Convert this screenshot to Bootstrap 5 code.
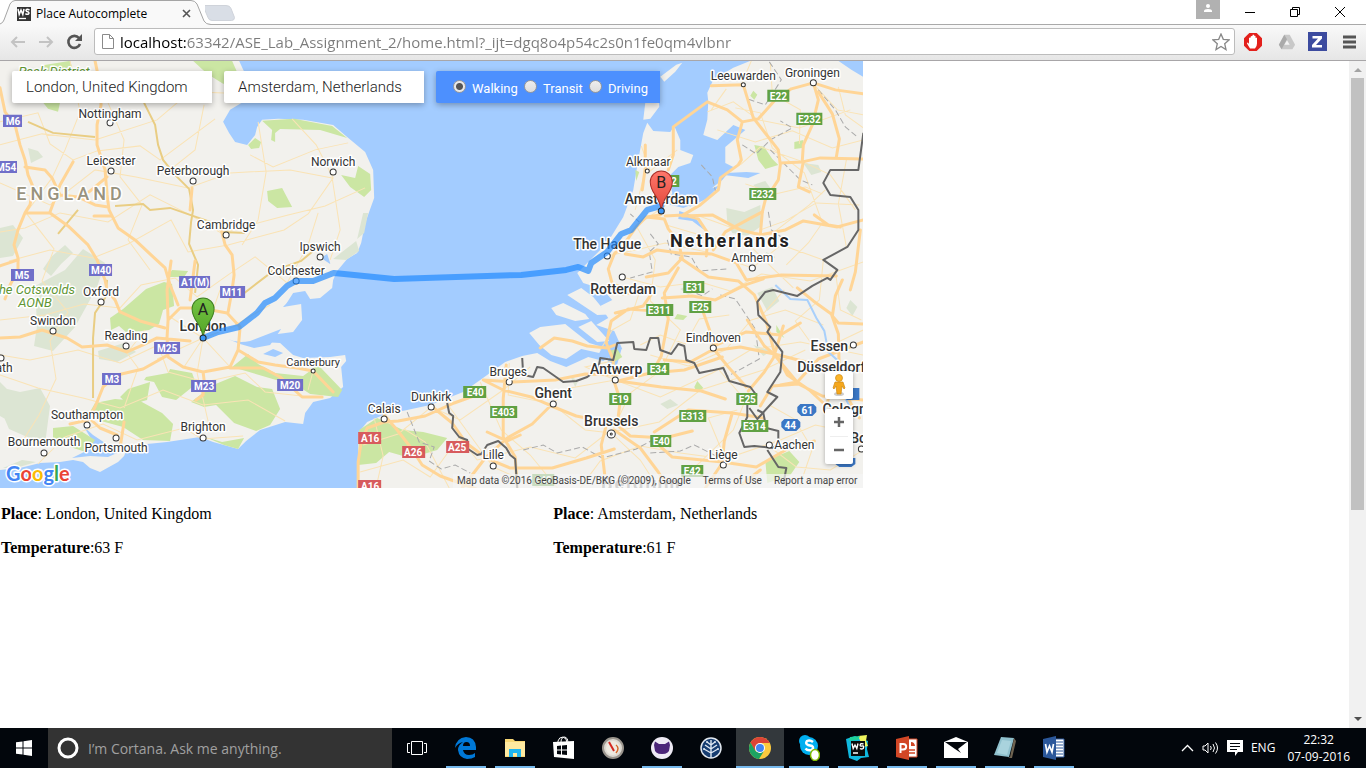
<!DOCTYPE html>
<html lang="en">
<head>
<meta charset="utf-8">
<meta name="viewport" content="width=device-width, initial-scale=1">
<title>Place Autocomplete</title>
<link href="https://cdn.jsdelivr.net/npm/bootstrap@5.3.0/dist/css/bootstrap.min.css" rel="stylesheet">
<style>
  body { font-family: "Open Sans", "Noto Sans", sans-serif; color: #000; background: #fff; }
  button { border: 0; background: none; padding: 0; color: inherit; }
  svg { display: block; flex: none; }

  /* browser frame */
  .tabstrip { height: 25px; }
  .tab-current { width: 205px; height: 25px; padding: 2px 14px 0 17px; font-size: 12px; line-height: 22px; }
  .tab-shape { position: absolute; left: 0; top: 0; z-index: 1; }
  .tab-current > :not(.tab-shape) { position: relative; z-index: 2; }
  .tab-title { margin-left: 5px; }
  .strip-line { position: absolute; left: 0; right: 0; bottom: 0; height: 1px; background: #a9a9a9; }
  .user-chip { width: 24px; height: 19px; background: #b1b1b1; }
  .toolbar { height: 36px; padding: 0 10px 2px 10px; background: linear-gradient(#f9f9f9, #e6e6e6); border-bottom: 1px solid #a8a6a8; }
  .omnibox { height: 27px; border: 1px solid #bcbcbc; border-radius: 3px; padding: 0 4px 0 6px; margin: 0 9px 0 10px; background: #fff; }
  .omnibox input { border: 0; outline: 0; padding: 0; margin-left: 5px; min-width: 0; font-size: 15px; line-height: 24px; color: transparent;
    background: linear-gradient(90deg, #000 67px, #7b7b7b 67px); -webkit-background-clip: text; background-clip: text; }

  /* scrollbar */
  .scroll-rail { width: 17px; background: #f1f1f1; }
  .scroll-rail button { height: 17px; }
  .scroll-thumb { height: 432px; margin: 0 2px; background: #c1c1c1; }

  /* page */
  .viewport { min-height: 0; }
  .map-frame { width: 64%; height: 64%; background: #a3ccff; font-family: Roboto, sans-serif; }
  .map-controls { position: absolute; top: 10px; left: 12px; gap: 12px; }
  .map-controls > * { height: 32px; border-radius: 2px 0 0 2px; box-shadow: 0 2px 6px rgba(0,0,0,.3); }
  .place-input { width: 200px; border: 1px solid transparent; background: #fff; padding: 0 11px 0 13px; font-size: 15px; font-weight: 300; color: #222; outline: 0; }
  .mode-picker { width: 224px; background: #4d90fe; color: #fff; font-size: 13px; font-weight: 400; padding: 3px 12px 0 17px; }
  .mode-picker input { appearance: none; width: 13px; height: 13px; margin: -5px 6px 0 0; border-radius: 50%; border: 1px solid #999; background: linear-gradient(#eee, #ddd); }
  .mode-picker input:checked { background: radial-gradient(circle, #555 0 3px, #e8e8e8 4px); }
  .map-button { width: 28px; background: #fff; border-radius: 2px; box-shadow: 0 1px 4px rgba(0,0,0,.3); }
  .map-tools { position: absolute; right: 10px; bottom: 24px; gap: 10px; }
  .map-tools hr { margin: 0 5px; color: #bbb; }
  .pegman { height: 28px; }
  .zoom-step { height: 27px; }
  .map-credit { position: absolute; right: 0; bottom: 0; height: 14px; padding: 0 6px 0 4px; gap: 12px; background: rgba(245,245,245,.7); font-size: 10px; line-height: 14px; }
  .map-credit, .map-credit a { color: #444; text-decoration: none; }
  .weather { padding: 17px 1px; font: 16px/18px "Liberation Serif", serif; }
  .weather section { width: 41%; }
  .weather p { margin: 0 0 16px; }

  /* map drawing */
  .land { fill: #f2f1ed; }
  .park { fill: #cbe6a3; }
  .moor { fill: #dce5d3; }
  .water { fill: #a3ccff; }
  .lane { fill: none; stroke: #fae3b5; stroke-width: 1; }
  .aroad { fill: none; stroke: #e9cd83; stroke-width: 2; }
  .mway { fill: none; stroke: #ffd596; stroke-width: 3; stroke-linejoin: round; stroke-linecap: round; }
  .frontier { fill: none; stroke: #666; stroke-width: 2; stroke-linejoin: round; }
  .province { fill: none; stroke: #aaa; stroke-width: 1; stroke-dasharray: 6 3; }
  .town text { font-size: 12px; fill: #333; stroke: #fff; stroke-width: 3px; paint-order: stroke; stroke-linejoin: round; text-anchor: middle; }
  .town .city { font-size: 14px; font-weight: 500; }
  .town .minor { font-size: 11px; }
  .town .reserve { font-size: 13px; font-style: italic; fill: #619634; }
  .dots circle { fill: #fff; stroke: #333; stroke-width: 1; }
  .shield text { font-size: 10px; font-weight: 700; fill: #fff; text-anchor: middle; }

  /* taskbar */
  .taskbar { height: 40px; background: #02060c; color: #fff; }
  .start { width: 48px; }
  .cortana { width: 344px; background: #333; padding-left: 9px; gap: 9px; }
  .cortana input { border: 0; outline: 0; background: none; padding: 0; color: #fff; font-size: 14px; }
  .cortana input::placeholder { color: #a0a0a0; opacity: 1; }
  .apps { gap: 1px; padding-left: 1px; }
  .app { width: 48px; position: relative; }
  .app.running::after { content: ""; position: absolute; left: 4px; right: 4px; bottom: 0; height: 2px; background: #76b9ed; }
  .app.current { background: #33383c; }
  .app.current::after { left: 0; right: 0; }
  .tray { gap: 8px; padding-right: 16px; font-size: 12px; }
  .clock { line-height: 17px; font-size: 12px; }
</style>
</head>
<body class="vh-100 d-flex flex-column overflow-hidden">

<header>
  <div class="tabstrip d-flex position-relative">
    <div class="strip-line"></div>
    <div class="tab-current position-relative d-flex align-items-center">
      <svg class="tab-shape" width="212" height="25" viewBox="0 0 212 25"><path d="M0 25V23Q3 22 4 19L10 4Q12 1 15 1H191Q195 1 197 4L204 21Q206 24.500 211 24.500V25Z" fill="#f9f9f9"/><path d="M0 24Q3 23 4 20L10 4Q12 .5 15 .5H191Q195 .5 197 4L204 21Q206 24.500 211 24.500" fill="none" stroke="#a5a5a5"/></svg>
      <svg width="14" height="14" viewBox="0 0 14 14"><rect width="14" height="14" fill="#333"/><path d="M1 2l1.200 5.500L4 3l1.800 4.500L7 2M12.500 3Q9.500 1.500 9 3.300 9.200 4.500 11 4.800 12.800 6 11.200 7.200 9.800 7.600 8.400 6.600" fill="none" stroke="#fff" stroke-width="1.500"/><path d="M2 11.500h7" stroke="#fff" stroke-width="1.300"/></svg>
      <span class="tab-title flex-grow-1 text-nowrap">Place Autocomplete</span>
      <button aria-label="Close tab"><svg width="9" height="9" viewBox="0 0 9 9"><path d="M1 1l7 7M8 1L1 8" stroke="#555" stroke-width="1.600"/></svg></button>
    </div>
    <button class="align-self-start" aria-label="New tab"><svg width="30" height="22" viewBox="0 0 30 22"><path d="M0 5.500h21q4 0 5 3l3.500 9q0 3-3 3H7q-3 0-4-3L-1 8q-1-2.500 1-2.500z" fill="#d9dee6" stroke="#cfd3da"/></svg></button>
    <div class="ms-auto d-flex align-items-start">
      <div class="user-chip d-flex justify-content-center"><svg width="10" height="13" viewBox="0 0 10 13"><circle cx="5" cy="6" r="2" fill="#fff"/><path d="M1 12v-1q0-2 4-2t4 2v1z" fill="#fff"/></svg></div>
      <button class="ms-4" aria-label="Minimise"><svg width="12" height="24" viewBox="0 0 12 24"><path d="M1 12.500h10" stroke="#000"/></svg></button>
      <button class="mx-4 px-2" aria-label="Restore"><svg width="14" height="24" viewBox="0 0 14 24"><path d="M2.500 9.500h7v7h-7zM4.500 9v-1.500h7v7H10" fill="none" stroke="#000"/></svg></button>
      <button class="me-3 pe-1" aria-label="Close"><svg width="12" height="24" viewBox="0 0 12 24"><path d="M1 7l10 10M11 7L1 17" stroke="#000"/></svg></button>
    </div>
  </div>
  <div class="toolbar d-flex align-items-center">
    <button aria-label="Back"><svg width="16" height="14" viewBox="0 0 16 14"><path d="M15 7H2M7 2L2 7l5 5" fill="none" stroke="#c3c3c3" stroke-width="2"/></svg></button>
    <button class="ms-2 ps-1" aria-label="Forward"><svg width="16" height="14" viewBox="0 0 16 14"><path d="M1 7h13M9 2l5 5-5 5" fill="none" stroke="#c3c3c3" stroke-width="2"/></svg></button>
    <button class="ms-2 ps-1" aria-label="Reload"><svg width="18" height="16" viewBox="0 0 18 16"><path d="M14 10A6 6 0 1 1 13 4" fill="none" stroke="#555" stroke-width="2.600"/><path d="M16 0v7H9z" fill="#555"/></svg></button>
    <div class="omnibox d-flex align-items-center flex-grow-1">
      <svg width="14" height="17" viewBox="0 0 14 17"><path d="M1.500 1.500h7l4 4v10h-11zM8.500 1.500v4h4" fill="#fff" stroke="#8a8a8a"/></svg>
      <input class="flex-grow-1" aria-label="Address" value="localhost:63342/ASE_Lab_Assignment_2/home.html?_ijt=dgq8o4p54c2s0n1fe0qm4vlbnr">
      <button aria-label="Bookmark"><svg width="18" height="18" viewBox="0 0 18 18"><path d="M9 1l2.300 5.300 5.700.6-4.300 3.800 1.300 5.900L9 13.500l-5 3.100 1.300-5.900L1 6.900l5.700-.6z" fill="#fff" stroke="#888" stroke-width="1.300"/></svg></button>
    </div>
    <button aria-label="Ad blocker"><svg width="18" height="18" viewBox="0 0 18 18"><path d="M5.300 0h7.400L18 5.300v7.400L12.700 18H5.300L0 12.700V5.300z" fill="#e3201b"/><path d="M5 5v6l-1-1.500q-1 0-1 1l3 5h5q2-2 2-5V5q-1-1-1.500 0v3-5q-1-1-1.500 0v4-5q-1-1-1.500 0v5-4Q7 2.500 6.500 4v4-3Q6 4 5 5z" fill="#fff"/></svg></button>
    <button class="ms-3" aria-label="Drive"><svg width="18" height="18" viewBox="0 0 20 18"><path d="M7 1h6l6 11-3 5H4l-3-5z" fill="#c8c8c8"/><path d="M7 1l3 5-6 11-3-5z" fill="#aaa"/><path d="M7 12l3-5 3 5z" fill="#f4f4f4"/></svg></button>
    <button class="ms-2 ps-1" aria-label="Zotero"><svg width="19" height="19" viewBox="0 0 19 19"><rect width="19" height="19" fill="#3c4b9f"/><path d="M4.500 4h9.500v2.500l-6 6.500h6v2.500h-10V13l6-6.500h-5.500z" fill="#fff"/></svg></button>
    <button class="ms-3" aria-label="Menu"><svg width="13" height="14" viewBox="0 0 13 14"><path d="M0 2h13M0 7h13M0 12h13" stroke="#555" stroke-width="3"/></svg></button>
  </div>
</header>

<main class="viewport flex-grow-1 d-flex">
  <div class="flex-grow-1 h-100 overflow-hidden">
    <div class="map-frame position-relative overflow-hidden">
      <svg width="100%" height="100%" viewBox="0 61 863 427" preserveAspectRatio="xMidYMid slice" role="img" aria-label="Route from London to Amsterdam">
        <rect class="water" x="0" y="61" width="863" height="427"/>
        <!-- Great Britain -->
        <path class="land" d="M0 61H239L245 74 252 88 247 100 240 104 230 110 223 122 229 133 235 142 247 145 255 135 257 127 262 120 278 119 303 120 333 125 347 137 365 152 373 170 374 198 365 223 361 243 357 253 347 259 337 271 333 280 332 288 320 298 310 299 305 291 293 293 286 304 283 307 301 304 302 320 293 332 270 335 262 342 280 343 293 355 303 358 330 357 345 355 346 361 341 367 343 387 330 398 313 402 305 413 303 424 285 422 260 430 246 441 238 449 213 442 200 437 167 442 147 444 127 449 124 456 118 462 100 472 90 468 83 462 73 460 60 462 40 463 20 468 0 470Z"/>
        <path class="water" d="M228 339Q238 344 250 341L281 329 270 345 254 348 240 344ZM84 427l9 8 12 8 14 9-11 5-18-1-18 2 14-7 9-4-5-10z"/>
        <path class="water" d="M330 264l-9-6 6-4 3 9zM283 307l12-4-3-5-9 9zM263 354l10-5 10 4-8 4z"/>
        <g class="moor">
          <path d="M35 286l30-16 18-21 22 14-8 24-22 40-22 24-19-5 3-20zM0 228l13-3 10 13-10 18-13 2zM51 257l14-12 8 8-12 11-10 12-8-7zM20 392l20-4 10 18-5 38-20-8-16-7-9-21 3-20zM98 351l26-8 12 9-19 10-18-3zM333 259l23-18 3 10-13 9zM28 148l10 3 5 6-12 6zM357 239l6-26 5 0-4 20zM0 382l10 10-3 28-7-4zM22 460l14 2-20 6-13 0z"/>
        </g>
        <g class="park">
          <path d="M110 318l13-9 15-13 8-7 18-7 8 2 2 22-11 4-4 14-10 6-22 3-8-7-8 4zM95 403l20-4 25 2 22 12 11 11-3 17-27-1-20-13-22-6-14-4zM146 377l22-4 2-4 22 4 4 11-20 16-14-3-8-15-10-2zM191 402l22-17 22-9 22 11 15 2 8 20-10 16-14 6-22-8-18-18-12 2zM53 428l20-2 22 14-9 12-19-6-14-6zM205 437l17 5 22-4-6 11-14-4zM232 367l16-13 10 10 17 9 28 3 15-11 24 25-4 7-28-3-20-13-14-1zM262 121l32-2 38 7 15 12-27-8-40-1-5 4v9l-4-2 1-10zM193 61h39l11 25-20-2-16-10zM40 66l30-5 6 18-14 7-18-8zM36 94l25 4-3 14-10-3zM267 191l15-3 10 19-15 1-9-7zM341 175l14 3 3-12 12 8 1 16-7 7-14-10zM172 270l16 1-4 6-17 0zM248 145l7-7 6 4-2 6-8 1zM128 389l22-7-3 18-18 5-9-8z"/>
        </g>
        <g class="lane">
          <path d="M0 122L38 113 50 144 73 160 97 151 140 146 160 160 215 119M0 145L42 134 95 140 157 120 190 92 245 94M0 183L50 205 95 170 136 177 188 188 230 173 290 170 332 178M0 232L25 228 60 213 108 222 150 195 190 215 221 233 288 215 325 206 365 188M9 261L50 250 93 258 128 244 171 220 188 252 228 245 284 230 308 214 333 178 316 145 292 119M0 320L45 315 84 304 120 308 141 285 175 278 197 297 228 275 255 257 287 283 308 245 318 213M0 355L30 360 78 350 120 363 158 345 168 372 205 382 245 373 265 392 302 396M0 375L38 388 83 398 120 408 163 390 203 405 248 400 285 421M38 464L65 437 103 424 137 440 184 428 202 439 243 436M108 103L124 140 120 177 142 205 128 240 150 270M204 105L195 150 170 170M258 122L266 172 258 220 242 245M348 143L315 150 273 167 250 155M332 178L340 230 330 260M70 61L80 112 65 150 52 178 26 213 54 249 42 281 68 312 50 341 56 379 39 415 17 450M124 408L138 368 127 353 145 330M220 290L203 338 197 373 210 430M203 338L167 315M203 338L230 367M203 338L238 325M203 338L184 367M203 338L201 310M203 338L157 359M313 371L308 390M270 305L235 325"/>
        </g>
        <path class="aroad" d="M28 122l25 11 42 4M144 103l11 22 3 20 5 15 12 15 14 14 4 21-2 12-2 22 9 21-3 28M115 206l28-2 7 6 20-2 20 7 20 7 13 10 22 1M107 280l-2 18-10 15-2 25v60M78 210l-20 24M243 294l30-23 28-10 18-15"/>
        <g class="mway">
          <path d="M0 88l5 24 10 13 5 20 5 15 3 15 5 12-3 18-5 8-7 17-4 15 4 13v12l-8 15-5 14M95 61l5 24 1 20-4 20v20l8 25 2 25 2 15 9 18 17 12 17 16 13 12 5 17 8 20M25 167l20 3 7 8 8 17 18 2 17 8 13 2M73 162l-13 23-10 27M27 213h23l18 13 20 19 9 15 8 20 2 10 8 10 5 12 20 9 25 7M192 188l-2 22M221 229l4 16 7 10 2 20-2 15-4 22"/>
          <path d="M168 320l12-12h20l27 5 13 14-2 23-8 17-27 5-20-5-15-10-1-20zM0 338l20-1 22-7 25 8 15 9 25-2 20 7 16-7 14-7 33 3M168 355l-25 14-26 6-14 12-8 20-7 13-18 4M88 417l12 11 17 7M230 368h33l17 9 22 20h20M238 350l20 12 17 3 22 3 16 3 20 21M203 372l1 8-1 15-7 5M0 266l18-6M168 320l-1-30 4-29M190 300l5-39M107 177l-18 15M94 216h17M120 448l4-26"/>
        </g>

        <!-- Continental Europe -->
        <path class="land" d="M358 488V433L367 422 383 415 407 410 430 405 463 392 480 380 505 362 522 356 537 353 550 361 566 367 588 357 603 361 622 349 614 331 596 325 608 318 600 306 612 300 602 289 583 283 577 273 590 260 607 243 623 217 633 190 638 160 643 133 647 123 653 131 670 132 674 126 680 140 680 150 693 155 690 163 678 167 668 177 672 193 667 204 683 208 700 201 713 187 722 180 733 167 725 163 725 147 738 136 745 130 733 125 717 140 703 135 707 120 708 102 707 93 713 80 733 68 750 61H863V488Z"/>
        <path class="water" d="M838 61h25v16l-12-7zM702 192l18-7-14 14-17 8zM724 175l24 3 12-5-14-1-20 1zM679 211l15 5 10 14-12-9-14-2zM612 344l9 6-6 21-8-7z"/>
        <g class="land">
          <path d="M529 333l11-6 25-3 10 8 14 11 13 4-3 6-18-4-15 10-15-4-12-10zM551 308l12-5 22 11 4 5-14 2-19-6zM567 295l14-7 12 9 9 11 17 6-22 1-12-8zM578 327l13-6 18 20-12 1zM645 103l13-6 1 10-9 12-7 1zM660 77l16-12 6-2-7 9-11 10z"/>
        </g>
        <g class="moor">
          <path d="M726 208l18 4 16-7 1 21-14 10-15-3-5-10zM757 293l15-6 7 14-12 10zM680 289l13-7 5 8-10 5zM850 300l7 7-5 9-6-8zM753 185l12-4 5 7-11 4zM753 345l18 6-8 5zM660 404l10-5 8 6-11 4zM766 252l9 5-5 6-8-3zM803 163l15 2 3 7-10 3zM570 376l8 5-3 6z"/>
        </g>
        <g class="park">
          <path d="M359 430l18-12 26 12 20 2 24 6-10 12-27 8-21-6-13 11-18 2zM754 145l10 2 8 12 6 6-13 4-7-9zM794 142l9-2-1 8-8 1zM765 461l24-10 10 11-9 13-23 8zM753 91l4 4-3 5-4-4zM608 351l9-2 5 8-8 5zM677 314l10 2-4 4-9-1zM635 170l4 2-3 9zM697 381l6 7-6 5-3-6zM776 325l8 13-8-6z"/>
        </g>
        <g class="lane">
          <path d="M363 445L398 434 431 407 460 420 503 390 530 367M360 472L403 460 430 477 459 437 477 460 530 447 575 458 607 433 659 422 700 390 763 370 805 350M374 418L383 456 376 487M404 429L425 442 449 488M445 401L466 430 493 467 540 488M480 382L501 430 530 455 558 489M509 363L508 395 552 404 570 388 615 380 660 397 712 373 750 350 800 342 863 355M552 404L585 430 611 433 640 460 658 488M611 433L630 393 660 371 680 330 650 301 655 260 636 226 676 198M615 380L585 367 612 361M622 277L660 287 700 282 730 291 761 274 810 281 863 262M607 256L635 250 665 243 706 252 752 268 781 245 823 260M641 146L650 171 677 150M707 112L733 102 758 120 799 128 850 110M717 130L755 142 792 131 832 148 863 140M740 165L760 147 803 162 830 175 855 210M696 215L735 229 770 235 809 205 825 190M666 225L710 238 742 238 770 266 793 288M741 85L751 61M726 89L711 110M770 63L772 94 800 110 799 144M812 83L837 110 863 115M838 87L845 115 863 128M823 260L819 300 795 321 817 352 863 330M835 270L840 310 861 320M650 355L688 366 725 350 751 320 785 310 823 325M717 368L745 400 733 430 700 462 668 489M580 488L600 461 640 446 680 453 725 459 780 440 815 425 863 435M725 459L708 418 737 410M767 445L796 467 830 470 863 450M799 487L812 449 794 419 769 405M760 230L785 221 816 203 859 205M784 290L762 315M600 350L612 330 630 320 640 290M645 171L635 210M735 108l25 5 12 35 32 25 18 50-14 20-22 22M846 160l-8 44 8 43M745 184l30 10 30-7 17 7M640 345l20-10 25 9 14-25 30-4"/>
        </g>
        <g class="province"><path d="M769 62l12 18-16 25-18-6M818 90l17 20 10 17 12 10M742 145l14 9 14-14 22-12-12-7M768 212l3 18 14 10M701 165l11 12 4 18M640 223l-10-9M650 234l8 10-9 8 3 20-22 6M667 240l4 14 20 3 8 14 27-2M720 295l15 4 20 30 4 30-33 18M688 290l14 6 10-7M407 412l12 30 15 5-5 14 12 8 14-4 15 8M523 450l20-5 14 8 25-6 20 11 34-9 18-10 18 9M650 453l30-2 14-6 30 15M770 150l30 30 12 5"/></g>
        <g class="mway">
          <path d="M673 127l34-25 20 8 15 12 16-3 17-19 16-11 22-6 22 7 28 4M711 86l32-1 10 33 25 32 2 15-2 15-13 20-3 12-2 23M742 122l-5 18 4 20-3 5-18 13-2 12-18 15-17 10-18 1M673 127v28l-5 15M780 163l22-1 18-4 43 1M813 83l5 17-6 25-9 20-1 15"/>
          <path d="M818 92l14 22 7 25-3 18M803 162l-5 25 11 5M645 145v23l-3 22M660 215l-14 2-10 10-12 17-10 10-6 15 4 15 18 6M646 217l18 2 4 10 10 13 4 16-14 15-22 4M683 215l15 4 10 15-2 22M762 212l-15 8-22 12-12 18M760 235l-20-5-28-15-30 1M625 254l18 3 14-7 22 3 32 1 25 9 10 17 35-5 55 1"/>
          <path d="M760 235l25-5 18-9 34 6 26-7M814 215l14 10 12 2M678 268l-14 25 4 26-7 37-10 18M680 258l28 19 30 4 16 14 12 27 9 34 20 24M662 298l30-2 23 4 30-15 18-6M700 304l10 28 4 14M714 346l32-14 34 3 20-12M655 311l-27-2-17 12-5 22 7 17 0 12M602 287l20 7 16-2M615 313l28-7 11-16M540 348l14-10 18 3 15 5 20 2 8-3M617 375l-32-1-30 6-42 2-30-2 20 10 28 7 20 9 25 10 35 7M618 381l32-8 34-3 38-13M618 381l43 6 40 4 24 8M614 382l6 18-3 25 13 11 34 2 28-7M614 430l26 18 18 24 10 16M606 425l-5 20 5 43M552 404l-20 20-25 14-22 20-23 30M506 365l-3 34v38l12 20 2 30M358 488v-26l3-20 6-14 17-6 14-1 27-5 29-13 25-9M384 415l13 15 14 18 11 17 18 11 36 13M430 405l22 18 14 20 20 15 24 10 42 0 34-10 28-9M487 432l20 9 13-6M664 360l26 2 20-11 30-4 34 7 40 10 49 7"/>
          <path d="M654 432l34-22 44 3 31 5M732 413l-8 28-2 21-50-5-18-16M722 462l34 5 31-18 27-8M760 406l12-20 26-2 24 12 41 4M747 320l17 26 14 12 9 17 22 15 15 14M797 288l16 13 18 13 7 20 1 40 6 20 14 24M748 391l16-19 9-14 10-32M842 280l-7 16-3 20 6 7 25 1M780 385l17-3 21-23 45-17M711 346l17 21 18 20M722 463l-17 25M760 470l-18 14M860 230l-5 42-5 18M850 365l-18 16-5 22 14 20 2 29"/>
        </g>
        <path d="M775 285l15 14 17 1 9 18 8 13 4 21 10 9 3 29 10 20" fill="none" stroke="#a9d0fb" stroke-width="2"/>
        <g class="frontier">
          <path d="M863 133l-5 37-28 0-7 13 7 12 20 2 8 13v20l-11 17-24 13 14 10-7 10-3-2-15 8-15 10-24-6-8 2-8 10 1 13 12 12-3 5 15 20-2 20-13 20 10 5-20 22-8-11"/>
          <path d="M522 358l1 17 10 2 4-10 6 1 20 14 13-1 11-4 11-8 2-11 13 2 4-17 16-1 1 7 12 1 4-12 8 0 2 12 11 4 7-10 6 2 2 14 8 3 5 10 24-5 6 13 21 6 6 8-9 10 0 12-8 16 5 14 10-1 19 2 5-5 0-12-12-3-3-15-6-3M767 450l11 17 8 1-3 16M447 403l2 10 4 3-1 12 7 9 8 3 1 9 9 6 4-1 6-9 11-4 8 7 4 7 5 4 2 29"/>
        </g>

        <!-- road shields -->
        <g class="shield">
          <g fill="#706fc9"><path d="M3 115h19v12H3zM0 161h17v12H0zM11 269h23v12H11zM89 264h23v12H89zM179 276h31v12h-31zM220 286h25v12h-25zM154 342h26v12h-26zM102 373h19v12h-19zM191 380h25v12h-25zM277 379h26v12h-26z"/></g>
          <g fill="#60a143"><path d="M767 90h22v12h-22zM796 113h26v12h-26zM749 188h27v12h-27zM655 175h24v12h-24zM683 281h21v12h-21zM646 304h27v12h-27zM689 301h22v12h-22zM647 363h22v12h-22zM463 386h23v12h-23zM490 406h27v12h-27zM609 393h22v12h-22zM736 393h21v12h-21zM679 410h27v12h-27zM741 420h27v12h-27zM650 435h21v12h-21zM681 465h22v12h-22zM532 474h22v12h-22z"/></g>
          <g fill="#d75b5d"><path d="M358 432h23v12h-23zM402 446h23v12h-23zM446 441h23v12h-23zM358 480h23v12h-23z"/></g>
          <g fill="#3b77c5"><path d="M797 407l3-3h13l3 3v5l-4 4h-11l-4-4zM781 422l3-3h13l3 3v5l-4 4h-11l-4-4zM846 388h13v12h-13zM835 458h20v6l-4 3h-12l-4-3z"/></g>
          <text x="13" y="125">M6</text><text x="6" y="171">M54</text><text x="22" y="279">M5</text><text x="101" y="274">M40</text><text x="195" y="286">A1(M)</text><text x="232" y="296">M11</text><text x="167" y="352">M25</text><text x="112" y="383">M3</text><text x="204" y="390">M23</text><text x="290" y="389">M20</text>
          <text x="778" y="100">E22</text><text x="809" y="123">E232</text><text x="762" y="198">E232</text><text x="668" y="185">E22</text><text x="694" y="291">E31</text><text x="659" y="314">E311</text><text x="700" y="311">E25</text><text x="658" y="373">E34</text><text x="475" y="396">E40</text><text x="503" y="416">E403</text><text x="620" y="403">E19</text><text x="747" y="403">E25</text><text x="692" y="420">E313</text><text x="754" y="430">E314</text><text x="661" y="445">E40</text><text x="692" y="475">E42</text><text x="543" y="484">E42</text>
          <text x="370" y="442">A16</text><text x="413" y="456">A26</text><text x="457" y="451">A25</text><text x="370" y="490">A16</text><text x="807" y="414">61</text><text x="790" y="429">44</text>
        </g>
        <g class="dots">
          <circle cx="110" cy="123" r="3"/><circle cx="111" cy="171" r="3"/><circle cx="193" cy="181" r="3"/><circle cx="333" cy="172" r="3"/><circle cx="226" cy="235" r="3"/><circle cx="320" cy="257" r="3"/><circle cx="296" cy="281" r="3"/><circle cx="101" cy="302" r="3"/><circle cx="53" cy="331" r="3"/><circle cx="126" cy="346" r="3"/><circle cx="87" cy="425" r="3"/><circle cx="116" cy="438" r="3"/><circle cx="44" cy="453" r="3"/><circle cx="203" cy="438" r="3"/><circle cx="313" cy="371" r="2"/><circle cx="1" cy="358" r="3"/><circle cx="384" cy="419" r="3"/><circle cx="431" cy="407" r="3"/><circle cx="493" cy="466" r="3"/><circle cx="509" cy="382" r="3"/><circle cx="553" cy="404" r="3"/><circle cx="615" cy="380" r="3"/><circle cx="622" cy="277" r="3"/><circle cx="607" cy="256" r="3"/><circle cx="647" cy="171" r="2"/><circle cx="743" cy="85" r="2"/><circle cx="813" cy="83" r="3"/><circle cx="752" cy="268" r="3"/><circle cx="713" cy="348" r="3"/><circle cx="853" cy="345" r="3"/><circle cx="769" cy="445" r="3"/><circle cx="723" cy="465" r="3"/><circle cx="861" cy="449" r="3"/><circle cx="611" cy="434" r="4"/><circle cx="611" cy="434" r="1" stroke-width="3"/>
        </g>
        <g class="town">
          <text x="110" y="118">Nottingham</text><text x="111" y="165">Leicester</text><text x="193" y="175">Peterborough</text><text x="333" y="166">Norwich</text><text x="226" y="229">Cambridge</text><text x="320" y="251">Ipswich</text><text x="296" y="275">Colchester</text><text x="101" y="296">Oxford</text><text x="53" y="325">Swindon</text><text x="126" y="340">Reading</text><text x="87" y="419">Southampton</text><text x="116" y="452">Portsmouth</text><text x="44" y="446">Bournemouth</text><text x="203" y="431">Brighton</text><text x="313" y="366" class="minor">Canterbury</text><text x="4" y="372">ath</text>
          <text x="384" y="413">Calais</text><text x="431" y="401">Dunkirk</text><text x="493" y="459">Lille</text><text x="508" y="376">Bruges</text><text x="553" y="398" class="city">Ghent</text><text x="616" y="374" class="city">Antwerp</text><text x="611" y="426" class="city">Brussels</text><text x="623" y="294" class="city">Rotterdam</text><text x="607" y="249" class="city">The Hague</text><text x="661" y="204" class="city">Amsterdam</text><text x="648" y="166">Alkmaar</text><text x="743" y="80">Leeuwarden</text><text x="812" y="77">Groningen</text><text x="752" y="262">Arnhem</text><text x="713" y="342">Eindhoven</text><text x="829" y="351" class="city">Essen</text><text x="831" y="372" class="city">Düsseldorf</text><text x="848" y="414" class="city">Cologne</text><text x="866" y="443" class="city">Bonn</text><text x="794" y="449">Aachen</text><text x="723" y="459">Liège</text><text x="203" y="331" class="city">London</text>
          <text x="54" y="76" class="reserve">Peak District</text><text x="37" y="294" class="reserve">he Cotswolds</text><text x="35" y="307" class="reserve">AONB</text>
          <text x="730" y="247" style="font-size:18px;font-weight:700;letter-spacing:2px;fill:#222">Netherlands</text>
          <text x="71" y="200" style="font-size:18px;font-weight:500;letter-spacing:4px;fill:#99937e">ENGLAND</text>
          <text x="641" y="490" style="font-size:18px;font-weight:700;letter-spacing:2px;fill:#888">Belgium</text>
        </g>
        <!-- route and end markers -->
        <path d="M203 338l15-6 21-5 18-14 8-10 10-5 12-12 9-5 17 0 18-7 3-1 60 6 127-4 45-5 12-3 10 4 3-8 16-11 14-18 10-4 16-20 14-4" fill="none" stroke="#1e88ff" stroke-opacity=".68" stroke-width="6" stroke-linejoin="round" stroke-linecap="round"/>
        <defs><linearGradient id="pinGreen" x2="0" y2="1"><stop stop-color="#75c545"/><stop offset="1" stop-color="#52a325"/></linearGradient><linearGradient id="pinRed" x2="0" y2="1"><stop stop-color="#ff776b"/><stop offset="1" stop-color="#e1463a"/></linearGradient></defs>
        <path d="M203 338C202 323 192 321 192 309A11 11 0 0 1 214 309C214 321 204 323 203 338Z" fill="url(#pinGreen)" stroke="#3f7f20"/>
        <path d="M661 211C660 196 650 194 650 182A11 11 0 0 1 672 182C672 194 662 196 661 211Z" fill="url(#pinRed)" stroke="#a9302a"/>
        <g font-size="16" fill="#222" text-anchor="middle"><text x="203" y="315">A</text><text x="661" y="188">B</text></g>
        <g fill="#3995f5" stroke="#222"><circle cx="203" cy="338" r="3"/><circle cx="661" cy="211" r="3"/></g>
        <text x="6" y="481" font-family="Lato" font-size="20" font-weight="700" stroke="#fff" stroke-width="3" paint-order="stroke" stroke-linejoin="round"><tspan fill="#4285f4">G</tspan><tspan fill="#ea4335">o</tspan><tspan fill="#fbbc05">o</tspan><tspan fill="#4285f4">g</tspan><tspan fill="#34a853">l</tspan><tspan fill="#ea4335">e</tspan></text>
      </svg>

      <form class="map-controls d-flex">
        <input class="place-input" type="text" aria-label="Origin" value="London, United Kingdom">
        <input class="place-input" type="text" aria-label="Destination" value="Amsterdam, Netherlands">
        <div class="mode-picker d-flex align-items-center justify-content-between">
          <label class="d-flex align-items-center"><input type="radio" name="mode" checked>Walking</label>
          <label class="d-flex align-items-center"><input type="radio" name="mode">Transit</label>
          <label class="d-flex align-items-center"><input type="radio" name="mode">Driving</label>
        </div>
      </form>

      <div class="map-tools d-flex flex-column">
        <button class="map-button pegman d-flex justify-content-center align-items-center" aria-label="Street View"><svg width="14" height="22" viewBox="0 0 14 22"><ellipse cx="7" cy="20" rx="5" ry="2" fill="#ccc"/><circle cx="7" cy="4" r="3.500" fill="#fbb52a" stroke="#cf8a16" stroke-width=".7"/><path d="M3 8h8l2 6-1 1-2-3-1 8H5l-1-8-2 3-1-1z" fill="#f5a71c" stroke="#cf8a16" stroke-width=".7"/></svg></button>
        <div class="map-button d-flex flex-column">
          <button class="zoom-step d-flex justify-content-center align-items-center" aria-label="Zoom in"><svg width="12" height="12" viewBox="0 0 12 12"><path d="M6 1v10M1 6h10" stroke="#666" stroke-width="2.500"/></svg></button>
          <hr>
          <button class="zoom-step d-flex justify-content-center align-items-center" aria-label="Zoom out"><svg width="12" height="12" viewBox="0 0 12 12"><path d="M1 6h10" stroke="#666" stroke-width="2.500"/></svg></button>
        </div>
      </div>
      <div class="map-credit d-flex"><span>Map data ©2016 GeoBasis-DE/BKG (©2009), Google</span><a href="#">Terms of Use</a><a href="#">Report a map error</a></div>
    </div>

    <div class="weather d-flex">
      <section><p><b>Place</b>: London, United Kingdom</p><p><b>Temperature</b>:63 F</p></section>
      <section><p><b>Place</b>: Amsterdam, Netherlands</p><p><b>Temperature</b>:61 F</p></section>
    </div>
  </div>
  <div class="scroll-rail d-flex flex-column">
    <button class="d-flex justify-content-center align-items-center" aria-label="Scroll up"><svg width="8" height="5" viewBox="0 0 8 5"><path d="M0 5l4-4 4 4z" fill="#a3a3a3"/></svg></button>
    <div class="scroll-thumb"></div>
    <button class="mt-auto d-flex justify-content-center align-items-center" aria-label="Scroll down"><svg width="8" height="5" viewBox="0 0 8 5"><path d="M0 0l4 4 4-4z" fill="#505050"/></svg></button>
  </div>
</main>

<footer class="taskbar d-flex">
  <button class="start d-flex justify-content-center align-items-center" aria-label="Start"><svg width="16" height="16" viewBox="0 0 16 16"><path d="M0 2.300L6.500 1.400V7.500H0zM7.500 1.200L16 0v7.500H7.500zM0 8.500h6.500v6.100L0 13.700zM7.500 8.500H16V16l-8.500-1.200z" fill="#fff"/></svg></button>
  <div class="cortana d-flex align-items-center">
    <svg width="22" height="22" viewBox="0 0 22 22"><circle cx="11" cy="11" r="9" fill="none" stroke="#fff" stroke-width="3"/></svg>
    <input class="flex-grow-1" type="text" aria-label="Search" placeholder="I’m Cortana. Ask me anything.">
  </div>
  <nav class="apps d-flex" aria-label="Applications">
    <button class="app d-flex justify-content-center align-items-center" aria-label="Task view"><svg width="20" height="14" viewBox="0 0 20 14"><path d="M4.500.5h11v13h-11zM3 2.500H.5v9H3M17 2.500h2.500v9H17" fill="none" stroke="#fff"/></svg></button>
    <button class="app running d-flex justify-content-center align-items-center" aria-label="Edge"><svg width="22" height="22" viewBox="0 0 22 22"><path d="M0 11Q1 1 11 0q9 0 10 10v3H8q1 5 6 5 4 0 6-2v4q-3 2-8 2-8-1-9-9 0-5 5-8-5 1-8 6zM8 9h7q0-4-3.500-4T8 9z" fill="#0078d7"/></svg></button>
    <button class="app running d-flex justify-content-center align-items-center" aria-label="File Explorer"><svg width="22" height="20" viewBox="0 0 22 20"><path d="M1 1h8l2 2h10v16H1z" fill="#f8d775"/><path d="M1 4h20v14H1z" fill="#ffe9a0"/><path d="M5 11h12v8h-4v-4H9v4H5z" fill="#20b5ef"/></svg></button>
    <button class="app d-flex justify-content-center align-items-center" aria-label="Store"><svg width="22" height="24" viewBox="0 0 22 24"><path d="M0 6l21-1v18L1 21z" fill="#fff"/><path d="M5 8V5q1-4 5-4 4 1 4 6M8 6q0-5 4-5 3 1 3 5" fill="none" stroke="#fff"/><path d="M4 10l4-.5v4H4zM9 9.500l5-.5v4.500H9zM4 14.500h4v4l-4-.5zM9 14.500h5V19l-5-.5z" fill="#02060c"/></svg></button>
    <button class="app d-flex justify-content-center align-items-center" aria-label="Speed test"><svg width="22" height="22" viewBox="0 0 22 22"><circle cx="11" cy="11" r="10" fill="#ddd9d2" stroke="#9b958e" stroke-width="2"/><circle cx="11" cy="11" r="7" fill="#eee9e0"/><path d="M7 5l5 9" stroke="#d32821" stroke-width="2"/><path d="M14 8q4 3 0 8" fill="none" stroke="#d2692c" stroke-width="1.500"/></svg></button>
    <button class="app running d-flex justify-content-center align-items-center" aria-label="GitHub"><svg width="22" height="22" viewBox="0 0 22 22"><circle cx="11" cy="11" r="11" fill="#eeeaf5"/><path d="M4 4.500L8 7h6l4-2.500q1.500 3 .5 6.500 0 6-7.500 6T3.500 11Q2.500 7.500 4 4.500z" fill="#4b2579"/></svg></button>
    <button class="app d-flex justify-content-center align-items-center" aria-label="SourceTree"><svg width="22" height="22" viewBox="0 0 22 22"><circle cx="11" cy="11" r="10" fill="#173d71" stroke="#e2e8f0" stroke-width="1.500"/><path d="M11 3v18M11 8L7 5M11 8l4-3M11 12L5 8M11 12l6-4M11 16l-7-4M11 16l7-4" stroke="#dfe8f3" stroke-width="1.400"/><g fill="#dfe8f3"><circle cx="7" cy="5" r="1"/><circle cx="15" cy="5" r="1"/><circle cx="4" cy="12" r="1"/><circle cx="18" cy="12" r="1"/></g></svg></button>
    <button class="app running current d-flex justify-content-center align-items-center" aria-label="Chrome"><svg width="22" height="22" viewBox="0 0 22 22"><circle cx="11" cy="11" r="11" fill="#fcca3f"/><path d="M1.500 5.500A11 11 0 0 1 20.500 5.500L21 6H11L6 14z" fill="#dc4437"/><path d="M1.500 5.500L6.500 14 11 16l4-2-5 8A11 11 0 0 1 1.500 5.500z" fill="#1da362"/><circle cx="11" cy="11" r="5" fill="#fff"/><circle cx="11" cy="11" r="4" fill="#4285f4"/></svg></button>
    <button class="app running d-flex justify-content-center align-items-center" aria-label="Skype"><svg width="22" height="26" viewBox="0 0 22 26"><circle cx="7" cy="6" r="6" fill="#00aff0"/><circle cx="11" cy="11" r="9" fill="#00aff0"/><path d="M15 7q-3-2.500-6-1-2 2.500 1 4l4 1q2.500 2-.5 4-4 1-6-1.500" fill="none" stroke="#fff" stroke-width="2.500"/><ellipse cx="17" cy="20" rx="4.500" ry="5.500" fill="#fff" stroke="#7fba00" stroke-width="1.500"/></svg></button>
    <button class="app running d-flex justify-content-center align-items-center" aria-label="WebStorm"><svg width="24" height="26" viewBox="0 0 24 26"><path d="M0 4l9-3 7 3 6 2-1 8 2 8-8 1-4 3-8-3z" fill="#10b8df"/><path d="M12 1l9-1-1 6 2 5-5 1z" fill="#eef45e"/><path d="M4 2l10-1-2 4-9 1z" fill="#1fd29a"/><rect x="5" y="6" width="14" height="15" fill="#0b0b0b"/><path d="M6 8.500l1.200 5L9 10l1.800 3.500 1.200-5M17.500 9q-3-1-3.300.8t2 1.200 1 2.500q-1.500 1-3.300 0M7 18h5" fill="none" stroke="#fff" stroke-width="1.400"/></svg></button>
    <button class="app running d-flex justify-content-center align-items-center" aria-label="PowerPoint"><svg width="22" height="24" viewBox="0 0 22 24"><path d="M12 3h9v18h-9z" fill="#fff" stroke="#d24726"/><path d="M13 14h6M13 17h6" stroke="#d24726" stroke-width="1.500"/><path d="M15 6v4h4q-.5-4-4-4z" fill="#d24726"/><path d="M0 3l13-3v24L0 21z" fill="#d24726"/><path d="M4.500 17V8h2.700q3 .2 3 2.700T7 13.500H4.500" fill="none" stroke="#fff" stroke-width="2"/></svg></button>
    <button class="app running d-flex justify-content-center align-items-center" aria-label="Mail"><svg width="24" height="22" viewBox="0 0 24 22"><path d="M0 5L12 0l12 5v16H0z" fill="#fff"/><path d="M1 5h22L14 12l3 4-6-4z" fill="#02060c"/></svg></button>
    <button class="app running d-flex justify-content-center align-items-center" aria-label="Notepad"><svg width="24" height="22" viewBox="0 0 24 22"><path d="M8 0l13 1-5 19-15-2z" fill="#8fc0cd"/><path d="M21 1l2 3-4 17-4 0 2-1z" fill="#6e6250"/><path d="M9 3l9 1-4 14-10-2z" fill="#a9d3dd"/></svg></button>
    <button class="app running d-flex justify-content-center align-items-center" aria-label="Word"><svg width="22" height="24" viewBox="0 0 22 24"><path d="M12 3h9v18h-9z" fill="#fff" stroke="#2b579a"/><path d="M13 6h7M13 9h7M13 12h7M13 15h7M13 18h7" stroke="#2b579a"/><path d="M0 3l13-3v24L0 21z" fill="#2b579a"/><path d="M2.500 8l1.500 8 2.500-6L9 16l1.500-8" fill="none" stroke="#fff" stroke-width="1.700"/></svg></button>
  </nav>
  <div class="tray ms-auto d-flex align-items-center">
    <svg width="13" height="8" viewBox="0 0 13 8"><path d="M1 7l5.500-5.500L12 7" fill="none" stroke="#fff" stroke-width="1.300"/></svg>
    <svg width="17" height="14" viewBox="0 0 17 14"><path d="M1 5h2l3-3v10L3 9H1zM8.500 5q1.500 2 0 4M11 3q3 4 0 8M13.500 1.500q4 5.500 0 11" fill="none" stroke="#fff"/></svg>
    <svg width="16" height="16" viewBox="0 0 16 16"><path d="M0 0h16v12h-5l-3 4v-4H0z" fill="#fff"/><path d="M3 3.500h10M3 6.500h10M3 9.500h7" stroke="#02060c"/></svg>
    <span>ENG</span>
    <div class="clock text-center ms-1">22:32<br>07-09-2016</div>
  </div>
</footer>
<script src="https://cdn.jsdelivr.net/npm/bootstrap@5.3.0/dist/js/bootstrap.bundle.min.js"></script>
</body>
</html>
